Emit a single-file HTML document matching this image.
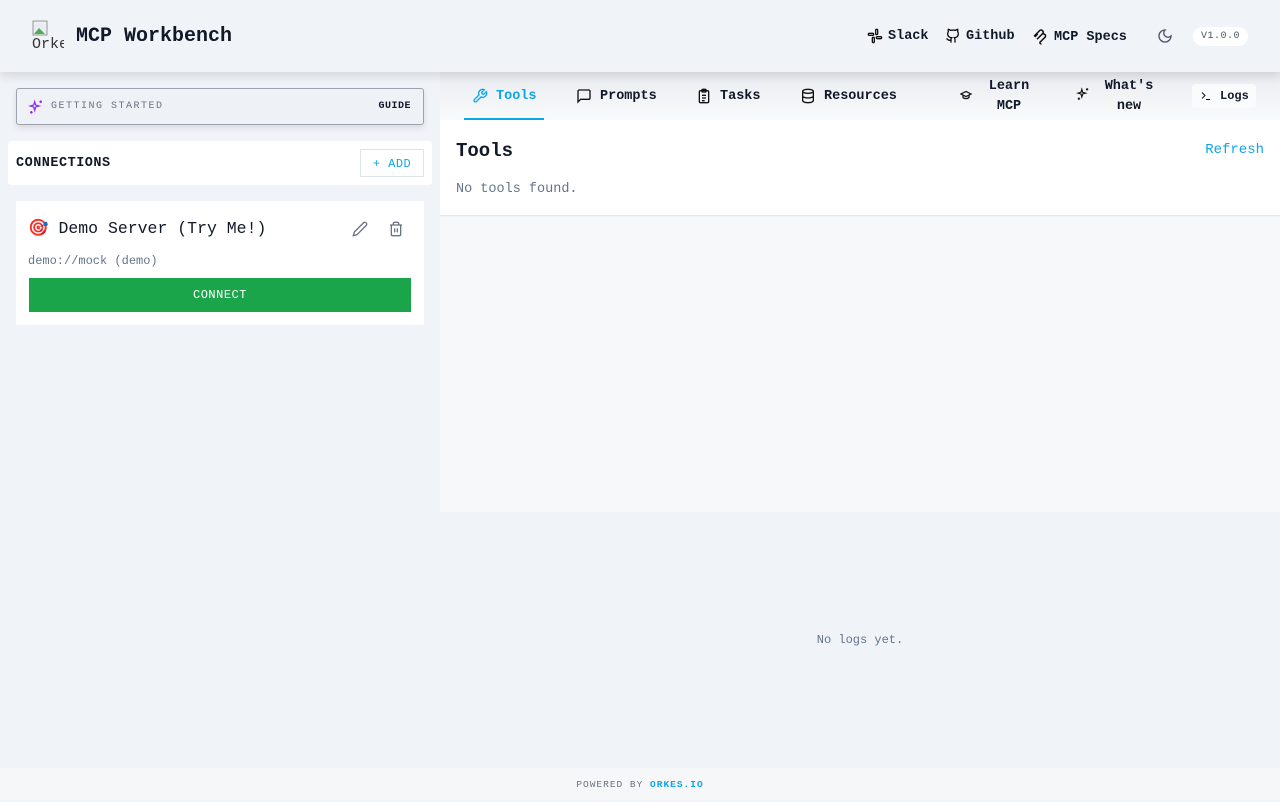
<!DOCTYPE html>
<html><head><meta charset="utf-8"><style>
*{box-sizing:border-box;margin:0;padding:0}
body{width:1280px;height:800px;overflow:hidden;background:#f0f3f8;font-family:"Liberation Mono",monospace;color:#111827;position:relative}
.hdr{position:absolute;left:0;top:0;width:1280px;height:72px;background:#f0f3f8;box-shadow:0 4px 10px rgba(0,0,0,.12);z-index:2}
.logo{position:absolute;left:32px;top:20px;width:32px;height:32px;font-size:13px;color:#333;overflow:hidden}
.title{position:absolute;left:76px;top:25px;font-size:20px;font-weight:bold;color:#111827}
.links{position:absolute;top:28px;font-size:13.5px;font-weight:bold;display:flex;align-items:center;gap:5px}
svg{display:block}
.ver{position:absolute;left:1193px;top:27px;width:55px;height:19px;background:#fff;border-radius:10px;font-size:10px;color:#4b5563;text-align:center;line-height:20px;letter-spacing:.5px}
.gs{position:absolute;left:16px;top:88px;width:408px;height:37px;border:1px solid #9ca3af;border-radius:3px;background:#eef2f7;box-shadow:0 3px 6px rgba(0,0,0,.1);font-size:10px;letter-spacing:1.5px;color:#6b7280}
.conn{position:absolute;left:8px;top:141px;width:424px;height:44px;background:#fff;border-radius:3px}
.card{position:absolute;left:16px;top:201px;width:408px;height:124px;background:#fff}
.tabs{position:absolute;left:440px;top:72px;width:840px;height:48px;background:linear-gradient(#e9ecf1,#f9fafb)}
.tab{position:absolute;top:16px;font-size:13.5px;font-weight:bold;display:flex;align-items:center;gap:8px;color:#111827}
.content{position:absolute;left:440px;top:120px;width:840px;height:96px;background:#fff;border-bottom:1px solid #e5e7eb}
.lower{position:absolute;left:440px;top:217px;width:840px;height:295px;background:#f7f8fa}
.foot{position:absolute;left:0;top:768px;width:1280px;height:32px;background:#f6f7f9;font-size:9.5px;letter-spacing:1px;color:#6b7280;text-align:center;line-height:34px}
</style></head><body>
<div class="hdr">
 <div class="logo"><svg width="16" height="16" viewBox="0 0 16 16"><rect x="1" y="1" width="14" height="14" fill="#e8eef4" stroke="#999"/><path d="M2 14L7 8l6 6z" fill="#4caf50"/></svg><div style="margin-top:0px;font-size:15px">Orkes</div></div>
 <div class="title">MCP Workbench</div>
 <div class="links" style="left:867px"><svg width="16" height="16" viewBox="0 0 24 24" fill="none" stroke="#111" stroke-width="2"><rect x="13" y="2" width="3" height="8" rx="1.5"/><rect x="8" y="14" width="3" height="8" rx="1.5"/><rect x="14" y="13" width="8" height="3" rx="1.5"/><rect x="2" y="8" width="8" height="3" rx="1.5"/></svg>Slack</div>
 <div class="links" style="left:945px"><svg width="16" height="16" viewBox="0 0 24 24" fill="none" stroke="#111" stroke-width="2"><path d="M15 22v-4a4.8 4.8 0 0 0-1-3.5c3 0 6-2 6-5.5.08-1.250-.27-2.48-1-3.5.28-1.15.28-2.35 0-3.5 0 0-1 0-3 1.5-2.64-.5-5.36-.5-8 0C6 2 5 2 5 2c-.3 1.15-.3 2.35 0 3.5A5.4 5.4 0 0 0 4 9c0 3.5 3 5.5 6 5.5-.39.49-.68 1.05-.85 1.65S8.93 17.38 9 18v4"/><path d="M9 18c-4.51 2-5-2-7-2"/></svg>Github</div>
 <div class="links" style="left:1031px"><svg width="18" height="18" viewBox="0 0 24 24" fill="none" stroke="#111" stroke-width="2"><path d="M4 11l8-8a3 3 0 0 1 4 4l-8 8M8 15l7-7a3 3 0 0 1 4 4l-7 7a1.5 1.5 0 0 0 2 2M9 8l-4 4"/></svg>MCP Specs</div>
 <svg style="position:absolute;left:1157px;top:28px" width="16" height="16" viewBox="0 0 24 24" fill="none" stroke="#4b5563" stroke-width="2"><path d="M12 3a6 6 0 0 0 9 9 9 9 0 1 1-9-9z"/></svg>
 <div class="ver">V1.0.0</div>
</div>

<div class="gs">
 <svg style="position:absolute;left:11px;top:10px" width="16" height="16" viewBox="0 0 24 24" fill="none" stroke="#9333ea" stroke-width="2"><path d="M10 4l1.5 5 5 1.5-5 1.5L10 17l-1.5-5-5-1.5 5-1.5z M19 2v4M17 4h4M5 18v4M3 20h4"/></svg>
 <span style="position:absolute;left:34px;top:12px">GETTING STARTED</span>
 <span style="position:absolute;right:12px;top:12px;color:#111827;font-weight:bold;letter-spacing:.5px">GUIDE</span>
</div>
<div class="conn">
 <span style="position:absolute;left:8px;top:15px;font-size:13.5px;font-weight:bold;letter-spacing:.5px">CONNECTIONS</span>
 <div style="position:absolute;left:352px;top:8px;width:64px;height:28px;border:1px solid #dde3ea;color:#0ea5e9;font-size:12px;line-height:28px;text-align:center;letter-spacing:.5px">+ ADD</div>
</div>
<div class="card">
 <span style="position:absolute;left:12px;top:18px;font-size:16.5px;font-family:'Liberation Mono','Noto Sans CJK SC',monospace">🎯 Demo Server (Try Me!)</span>
 <svg style="position:absolute;left:336px;top:20px" width="16" height="16" viewBox="0 0 24 24" fill="none" stroke="#6b7280" stroke-width="2"><path d="M17 3a2.85 2.85 0 1 1 4 4L7.5 20.5 2 22l1.5-5.5z"/></svg>
 <svg style="position:absolute;left:372px;top:20px" width="16" height="16" viewBox="0 0 24 24" fill="none" stroke="#6b7280" stroke-width="2"><path d="M3 6h18M19 6v14a2 2 0 0 1-2 2H7a2 2 0 0 1-2-2V6M8 6V4a2 2 0 0 1 2-2h4a2 2 0 0 1 2 2v2M10 11v6M14 11v6"/></svg>
 <span style="position:absolute;left:12px;top:53px;font-size:12px;color:#64748b">demo://mock (demo)</span>
 <div style="position:absolute;left:13px;top:77px;width:382px;height:34px;background:#1aa54a;color:#fff;font-size:12px;text-align:center;line-height:35px;letter-spacing:.5px">CONNECT</div>
</div>

<div class="tabs">
 <div class="tab" style="left:32px;color:#0ea5e9"><svg width="16" height="16" viewBox="0 0 24 24" fill="none" stroke="#0ea5e9" stroke-width="2"><path d="M14.7 6.3a1 1 0 0 0 0 1.4l1.6 1.6a1 1 0 0 0 1.4 0l3.770-3.77a6 6 0 0 1-7.94 7.94l-6.91 6.91a2.12 2.12 0 0 1-3-3l6.910-6.91a6 6 0 0 1 7.94-7.94z"/></svg>Tools</div>
 <div style="position:absolute;left:24px;top:46px;width:80px;height:2px;background:#0ea5e9"></div>
 <div class="tab" style="left:136px"><svg width="16" height="16" viewBox="0 0 24 24" fill="none" stroke="#111" stroke-width="2"><path d="M21 15a2 2 0 0 1-2 2H7l-4 4V5a2 2 0 0 1 2-2h14a2 2 0 0 1 2 2z"/></svg>Prompts</div>
 <div class="tab" style="left:256px"><svg width="16" height="16" viewBox="0 0 24 24" fill="none" stroke="#111" stroke-width="2"><rect x="5" y="4" width="14" height="18" rx="2"/><rect x="9" y="2" width="6" height="4" rx="1"/><path d="M9 11h6M9 15h6M9 19h4"/></svg>Tasks</div>
 <div class="tab" style="left:360px"><svg width="16" height="16" viewBox="0 0 24 24" fill="none" stroke="#111" stroke-width="2"><ellipse cx="12" cy="5" rx="8" ry="3"/><path d="M4 5v14c0 1.7 3.6 3 8 3s8-1.3 8-3V5M4 12c0 1.7 3.6 3 8 3s8-1.3 8-3"/></svg>Resources</div>
 <svg style="position:absolute;left:520px;top:17px" width="12" height="12" viewBox="0 0 24 24" fill="none" stroke="#111" stroke-width="2.5"><path d="M22 10L12 5 2 10l10 5 10-5zM6 12v5c3 3 9 3 12 0v-5"/></svg>
 <div style="position:absolute;left:540px;top:5px;width:58px;text-align:center;font-size:13.5px;font-weight:bold;line-height:20px">Learn<br>MCP</div>
 <svg style="position:absolute;left:636px;top:15px" width="14" height="14" viewBox="0 0 24 24" fill="none" stroke="#111" stroke-width="2"><path d="M10 4l1.5 5 5 1.5-5 1.5L10 17l-1.5-5-5-1.5 5-1.5z M19 2v4M17 4h4M5 18v4M3 20h4"/></svg>
 <div style="position:absolute;left:660px;top:5px;width:58px;text-align:center;font-size:13.5px;font-weight:bold;line-height:20px">What's<br>new</div>
 <div style="position:absolute;left:752px;top:12px;width:64px;height:24px;background:#fafbfc;border-radius:3px;font-size:12px;font-weight:bold;line-height:25px;padding-left:28px">Logs</div>
 <svg style="position:absolute;left:760px;top:18px" width="12" height="12" viewBox="0 0 24 24" fill="none" stroke="#111" stroke-width="2"><path d="M4 17l6-6-6-6M12 19h8"/></svg>
</div>
<div class="content">
 <span style="position:absolute;left:16px;top:20px;font-size:19px;font-weight:bold;color:#111827">Tools</span>
 <span style="position:absolute;right:16px;top:22px;font-size:14px;color:#0ea5e9">Refresh</span>
 <span style="position:absolute;left:16px;top:62px;font-size:13.5px;color:#64748b">No tools found.</span>
</div>
<div class="lower"></div>
<div style="position:absolute;left:440px;top:633px;width:840px;text-align:center;font-size:12px;color:#64748b">No logs yet.</div>
<div class="foot">POWERED BY <span style="color:#0ea5e9;font-weight:bold">ORKES.IO</span></div>
</body></html>
